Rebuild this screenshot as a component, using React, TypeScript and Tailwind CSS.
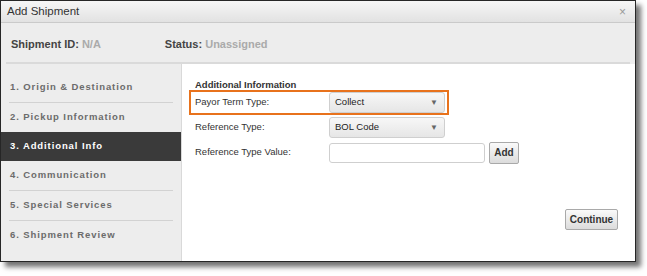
import React from "react";

const steps = [
  "1. Origin & Destination",
  "2. Pickup Information",
  "3. Additional Info",
  "4. Communication",
  "5. Special Services",
  "6. Shipment Review",
];

function Select({ value }: { value: string }) {
  return (
    <div className="flex h-[21px] w-[116px] items-center justify-between rounded-[3px] border border-[#cfcfcf] bg-gradient-to-b from-[#f7f7f7] to-[#e6e6e6] pl-[5px] pr-[6px] text-[9.5px] text-[#222]">
      <span>{value}</span>
      <span className="text-[8px] text-[#666]">▼</span>
    </div>
  );
}

function Row({ label, children }: { label: string; children: React.ReactNode }) {
  return (
    <div className="flex h-[21px] items-center">
      <div className="w-[134px] text-[9.5px] text-[#333]">{label}</div>
      {children}
    </div>
  );
}

export default function App() {
  const active = 2;
  return (
    <div className="h-[276px] w-[647px] bg-white font-['Liberation_Sans',Arial,sans-serif]">
      <div className="flex h-[262px] w-[636px] flex-col border border-[#262626] bg-[#ededed] shadow-[5px_5px_5px_rgba(0,0,0,0.55)]">
        {/* title bar */}
        <div className="flex h-[22px] items-center justify-between border-b border-[#cacaca] bg-gradient-to-b from-[#f6f6f6] to-[#e2e2e2] pl-[6px] pr-[9px]">
          <span className="text-[11.5px] text-[#333]">Add Shipment</span>
          <span className="text-[12px] leading-none text-[#999]">×</span>
        </div>

        {/* header */}
        <div className="flex h-[39px] items-center gap-[64px] px-[10px] pt-[4px] text-[11px] font-bold">
          <span className="text-[#444]">
            Shipment ID: <span className="text-[#aaa]">N/A</span>
          </span>
          <span className="text-[#444]">
            Status: <span className="text-[#aaa]">Unassigned</span>
          </span>
        </div>
        <div className="mx-[5px] h-[2px] bg-[#dadada]" />

        {/* body */}
        <div className="flex flex-1">
          <div className="w-[181px] border-r border-[#d9d9d9] pt-[9px]">
            {steps.map((s, i) => {
              const isActive = i === active;
              const nextActive = i + 1 === active;
              const last = i === steps.length - 1;
              return (
                <div key={s} className={isActive ? "bg-[#3a3a3a]" : ""}>
                  <div
                    className={`flex h-[29px] items-center px-[9px] text-[9.5px] font-bold tracking-[0.9px] ${
                      isActive ? "text-white" : "text-[#6b6b6b]"
                    }`}
                  >
                    {s}
                  </div>
                  {!isActive && !nextActive && !last && (
                    <div className="mx-[8px] h-px bg-[#d2d2d2]" />
                  )}
                </div>
              );
            })}
          </div>

          <div className="relative flex flex-1 flex-col bg-white pl-[13px] pr-[17px] pt-[15px]">
            <div className="text-[9.5px] font-bold leading-[12px] text-[#333]">Additional Information</div>
            <div className="mt-[1px] flex flex-col gap-[4px]">
              <Row label="Payor Term Type:">
                <Select value="Collect" />
              </Row>
              <Row label="Reference Type:">
                <Select value="BOL Code" />
              </Row>
              <Row label="Reference Type Value:">
                <div className="h-[20px] w-[156px] rounded-[3px] border border-[#cfcfcf] bg-white" />
                <button className="ml-[4px] h-[22px] w-[30px] rounded-[2px] border border-[#a9a9a9] bg-gradient-to-b from-[#fafafa] to-[#dcdcdc] text-[10px] font-bold text-[#333]">
                  Add
                </button>
              </Row>
            </div>
            <div className="mt-[46px] flex justify-end">
              <button className="h-[21px] w-[53px] rounded-[2px] border border-[#a9a9a9] bg-gradient-to-b from-[#fafafa] to-[#dcdcdc] text-[10px] font-bold text-[#333]">
                Continue
              </button>
            </div>

            {/* highlight annotation */}
            <div className="absolute left-[7px] top-[26px] h-[25px] w-[260px] border-2 border-[#e8721c]" />
          </div>
        </div>
      </div>
    </div>
  );
}
